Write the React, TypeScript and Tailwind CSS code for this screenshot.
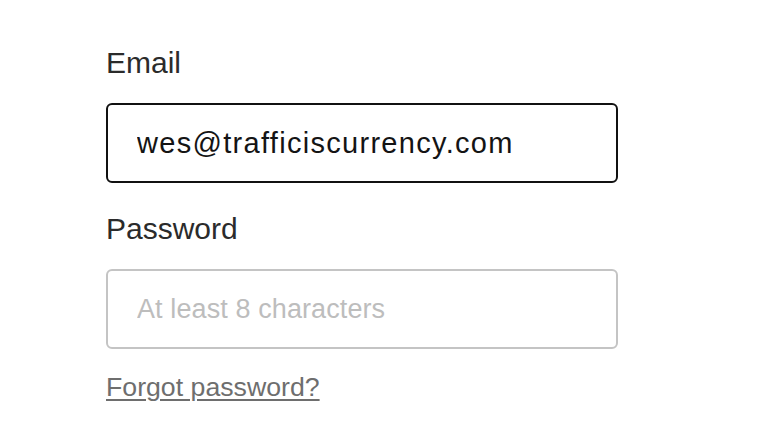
const SignInFields = () => {
  return (
    <div className="min-h-[430px] w-full bg-white font-['Liberation_Sans',Arial,sans-serif]">
      <div className="w-[512px] ml-[106px] pt-[45px] flex flex-col">
        <label className="text-[30px] leading-[36px] text-[#2b2b2b] mb-[22px]">Email</label>
        <input
          type="email"
          readOnly
          defaultValue="wes@trafficiscurrency.com"
          className="box-border h-[80px] w-full rounded-[6px] border-2 border-[#111111] bg-white pl-[29px] pr-4 text-[29px] tracking-[1.3px] text-[#141414] outline-none"
        />
        <label className="mt-[28px] text-[30px] leading-[36px] text-[#2b2b2b] mb-[22px]">Password</label>
        <input
          type="password"
          readOnly
          placeholder="At least 8 characters"
          className="box-border h-[80px] w-full rounded-[6px] border-2 border-[#c4c4c4] bg-white pl-[29px] pr-4 text-[27px] tracking-[0.1px] text-[#141414] outline-none placeholder:text-[#bdbdbd]"
        />
        <div className="mt-[22px]">
          <a
            href="#"
            className="text-[26.7px] leading-[32px] text-[#6e6e6e] underline decoration-2 underline-offset-[3px]"
          >
            Forgot password?
          </a>
        </div>
      </div>
    </div>
  );
};

export default function App() {
  return <SignInFields />;
}
